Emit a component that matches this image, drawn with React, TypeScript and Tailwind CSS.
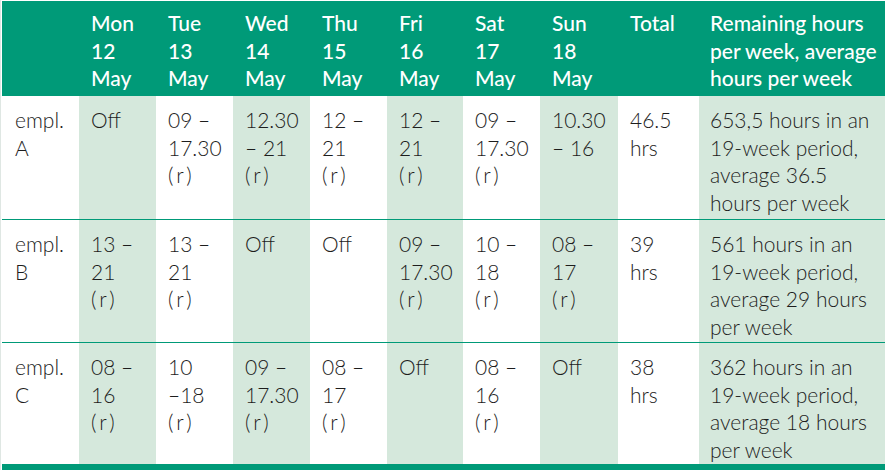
import React from 'react';

const days = [
  ['Mon', '12'],
  ['Tue', '13'],
  ['Wed', '14'],
  ['Thu', '15'],
  ['Fri', '16'],
  ['Sat', '17'],
  ['Sun', '18'],
];

const widths = ['w-[77px]', 'w-[77px]', 'w-[77px]', 'w-[77px]', 'w-[77px]', 'w-[76px]', 'w-[77px]', 'w-[78px]', 'w-[81px]', 'w-[186px]'];

const rows = [
  {
    name: ['empl.', 'A'],
    pad: 'pb-[3px]',
    shifts: [['Off'], ['09 –', '17.30', '(r)'], ['12.30', '– 21', '(r)'], ['12 –', '21', '(r)'], ['12 –', '21', '(r)'], ['09 –', '17.30', '(r)'], ['10.30', '– 16']],
    total: ['46.5', 'hrs'],
    remaining: ['653,5 hours in an', '19-week period,', 'average 36.5', 'hours per week'],
  },
  {
    name: ['empl.', 'B'],
    pad: 'pb-[2px]',
    shifts: [['13 –', '21', '(r)'], ['13 –', '21', '(r)'], ['Off'], ['Off'], ['09 –', '17.30', '(r)'], ['10 –', '18', '(r)'], ['08 –', '17', '(r)']],
    total: ['39', 'hrs'],
    remaining: ['561 hours in an', '19-week period,', 'average 29 hours', 'per week'],
  },
  {
    name: ['empl.', 'C'],
    pad: 'pb-[1px]',
    shifts: [['08 –', '16', '(r)'], ['10', '–18', '(r)'], ['09 –', '17.30', '(r)'], ['08 –', '17', '(r)'], ['Off'], ['08 –', '16', '(r)'], ['Off']],
    total: ['38', 'hrs'],
    remaining: ['362 hours in an', '19-week period,', 'average 18 hours', 'per week'],
  },
];

function Lines({ lines }: { lines: string[] }) {
  return (
    <>
      {lines.map((l, i) =>
        l === '(r)' ? (
          <div key={i} className="whitespace-nowrap tracking-[3px]">(r)</div>
        ) : (
          <div key={i} className="whitespace-nowrap">{l}</div>
        )
      )}
    </>
  );
}

export default function App() {
  return (
    <div className="w-[889px] h-[470px] bg-white overflow-hidden pt-px pl-[1px] border-l border-[#dfe7e3]">
      <table
        className="table-fixed border-collapse w-[883px] text-[21px] leading-[27.5px]"
        style={{ fontFamily: 'Lato, "Open Sans", sans-serif' }}
      >
        <thead>
          <tr className="bg-[#009a78] text-white align-top">
            <th className={`${widths[0]} h-[95px]`}></th>
            {days.map(([d, n], i) => (
              <th key={d} className={`${widths[i + 1]} text-left font-medium pl-[12px] pt-[8px]`}>
                <Lines lines={[d, n, 'May']} />
              </th>
            ))}
            <th className={`${widths[8]} text-left font-medium pl-[12px] pt-[8px]`}>Total</th>
            <th className={`${widths[9]} text-left font-medium pl-[11px] pt-[8px]`}>
              <Lines lines={['Remaining hours', 'per week, average', 'hours per week']} />
            </th>
          </tr>
        </thead>
        <tbody className="text-[#1d1d1d] font-light">
          {rows.map((r, ri) => (
            <tr key={ri} className={`align-top ${ri < 2 ? 'border-b border-[#009a78]' : 'border-b-[7px] border-[#009a78]'}`}>
              <td className={`pl-[13px] pt-[10px] ${r.pad} bg-white`}>
                <Lines lines={r.name} />
              </td>
              {r.shifts.map((s, i) => (
                <td key={i} className={`pl-[12px] pt-[10px] ${r.pad} ${i % 2 === 0 ? 'bg-[#d5e8dc]' : 'bg-white'}`}>
                  <Lines lines={s} />
                </td>
              ))}
              <td className={`pl-[12px] pt-[10px] ${r.pad} bg-white`}>
                <Lines lines={r.total} />
              </td>
              <td className={`pl-[11px] pt-[10px] ${r.pad} bg-[#d5e8dc]`}>
                <Lines lines={r.remaining} />
              </td>
            </tr>
          ))}
        </tbody>
      </table>
    </div>
  );
}
